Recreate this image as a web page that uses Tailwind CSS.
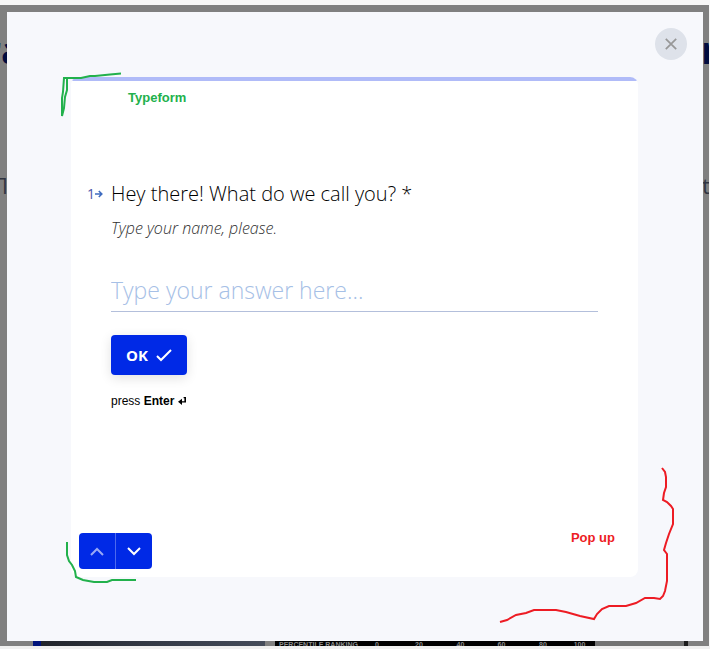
<!DOCTYPE html>
<html lang="en">
<head>
    <meta charset="UTF-8">
    <meta name="viewport" content="width=device-width, initial-scale=1.0">
    <title>Typeform Popup</title>
    <script src="https://cdn.jsdelivr.net/npm/@tailwindcss/browser@4"></script>
</head>
<body class="min-h-screen flex flex-col bg-[#f7f7f7] font-['Open_Sans',sans-serif] text-black">
    <!-- Dimmed page -->
    <div class="relative flex-1 flex mt-[5px] mr-px bg-[#808080] overflow-hidden">
        <!-- Page content behind the popup -->
        <div class="absolute inset-0 overflow-hidden" aria-hidden="true">
            <span class="absolute top-[14px] right-full -mr-6 text-[38px] leading-[60px] font-bold text-[#000c3f]">ra</span>
            <span class="absolute top-[14px] left-full -ml-2 text-[38px] leading-[60px] font-bold text-[#000c3f]">r</span>
            <span class="absolute top-[162px] right-full -mr-2 text-[22px] leading-9 text-[#303440]">П</span>
            <span class="absolute top-[162px] left-full -ml-[7px] text-[22px] leading-9 text-[#303440]">t</span>
            <div class="absolute bottom-0 inset-x-0 h-[5px] flex pl-[33px] overflow-hidden">
                <div class="w-2 bg-[#00137c]"></div>
                <div class="w-[224px] mr-[10px] bg-linear-to-r from-[#22252b] via-[#343a46] to-[#454c5a]"></div>
                <div class="w-80 flex bg-black text-[#8a8a8a] font-['Liberation_Sans',sans-serif] text-[7px] leading-[7px] font-bold">
                    <span class="w-[81px] pl-1 whitespace-nowrap">PERCENTILE RANKING</span>
                    <span class="w-[42px] text-center">0</span>
                    <span class="w-[42px] text-center">20</span>
                    <span class="w-[41px] text-center">40</span>
                    <span class="w-[41px] text-center">60</span>
                    <span class="w-[42px] text-center">80</span>
                    <span class="w-[31px] text-center">100</span>
                </div>
                <div class="w-[89px] bg-[#737373]"></div>
                <div class="w-1 bg-[#1c1c1c]"></div>
            </div>
        </div>

        <!-- Popup -->
        <div class="relative flex-1 flex flex-col mt-[7px] mb-[5px] ml-[7px] mr-[6px] bg-[#f7f8fc]">
            <button type="button" aria-label="Close" class="self-end mt-4 mr-4 size-8 rounded-full bg-[#dee2ea] flex items-center justify-center">
                <svg class="size-3" viewBox="0 0 12 12" fill="none" stroke="#979797" stroke-width="1.7"><path d="M.8.8l10.4 10.4M11.2.8L.8 11.2"/></svg>
            </button>

            <main class="flex-1 flex flex-col mt-[17px] mx-16 mr-[65px] mb-16 rounded-lg bg-white overflow-hidden">
                <div class="h-1 bg-[#b0bbf8]"></div>
                <p class="mt-[9px] ml-[57px] font-['Liberation_Sans',sans-serif] text-[13px] leading-4 font-bold text-[#22b14c]">Typeform</p>

                <form class="mt-[74px] pl-4 pr-10">
                    <div class="flex">
                        <div class="w-6 flex items-center h-7 text-sm text-[#4b55a8]">
                            <span>1</span>
                            <svg class="w-2 h-2" viewBox="0 0 8 8" fill="none" stroke="#3f6cc0" stroke-width="1.6"><path d="M0 4h6.5M3.8 1L6.8 4l-3 3"/></svg>
                        </div>
                        <label for="name" class="text-[20px] leading-7 font-light">Hey there! What do we call you? *</label>
                    </div>
                    <div class="pl-6">
                        <p id="hint" class="mt-2 text-[16px] leading-6 italic font-light text-[#303030]">Type your name, please.</p>
                        <input id="name" type="text" aria-describedby="hint" placeholder="Type your answer here..." class="mt-7 block w-full h-11 border-b border-[#b3bfdb] text-[23px] font-light outline-none placeholder:text-[#a6c0e6]">
                        <button type="submit" class="mt-[23px] h-10 px-[15px] rounded bg-[#0029e6] text-white flex items-center gap-2 text-[15px] font-bold shadow-[0_3px_12px_rgba(0,0,0,0.12)]">
                            OK
                            <svg class="w-4 h-[13px]" viewBox="0 0 16 13" fill="#fff"><path d="M14.293.293l1.414 1.414L5 12.414.293 7.707l1.414-1.414L5 9.586z"/></svg>
                        </button>
                        <p class="mt-[18px] flex items-center text-xs leading-4 font-['Liberation_Sans',sans-serif]">
                            <span>press <b>Enter</b></span>
                            <svg class="ml-1 w-2 h-2" viewBox="0 0 8 8" fill="#000"><path d="M5.6 0H8v5.6H4V8L0 4.8 4 1.8v2.4h2.4V1.2h-.8z"/></svg>
                        </p>
                    </div>
                </form>

                <div class="mt-auto flex items-end justify-between pl-2 pr-[23px] pb-2">
                    <div class="flex rounded bg-[#0029e6] overflow-hidden">
                        <button type="button" aria-label="Previous" class="w-9 h-9 flex items-center justify-center">
                            <svg class="w-[14px] h-[9px]" viewBox="0 0 14 9" fill="none" stroke="#99a9f5" stroke-width="2"><path d="M1 8l6-6 6 6"/></svg>
                        </button>
                        <button type="button" aria-label="Next" class="w-[37px] h-9 border-l border-[#4d69ee] flex items-center justify-center">
                            <svg class="w-[14px] h-[9px]" viewBox="0 0 14 9" fill="none" stroke="#fff" stroke-width="2"><path d="M1 1l6 6 6-6"/></svg>
                        </button>
                    </div>
                    <p class="pb-[23px] font-['Liberation_Sans',sans-serif] text-[13px] leading-4 font-bold text-[#ed1c24]">Pop up</p>
                </div>
            </main>

            <!-- Pen marks around the form and the popup -->
            <svg class="absolute top-[57px] left-[51px] w-[66px] h-12 pointer-events-none" viewBox="58 69 66 48" fill="none" stroke="#22b14c" stroke-width="2"><path d="M121 73.500L110 74.500 95 76 90 76 81 78 64 78 63 92 62 98 62 116 64 108 65 97 67 90 67 79"/></svg>
            <svg class="absolute bottom-[57px] left-[57px] w-[74px] h-[46px] pointer-events-none" viewBox="64 538 74 46" fill="none" stroke="#22b14c" stroke-width="2"><path d="M67 542L67 555 69 561 72 565 75 571 76 577 83 580 94 582 107 582 112 580 136 580"/></svg>
            <svg class="absolute bottom-4 right-[26px] w-[180px] h-[161px] pointer-events-none" viewBox="497 464 180 161" fill="none" stroke="#ed1c24" stroke-width="2"><path d="M662 468L665 472 666 477 666 487 664 493 663 500 667 502 671 506 673 509 673 524 669 534 666 543 664 550 667 554 667 581 665 591 663 596 660 599 654 598 645 598 636 603 626 606 609 606 602 609 597 614 594 619 580 616 566 612 556 610 534 610 526 613 516 615 507 620 500 622"/></svg>
        </div>
    </div>
    <div class="h-[3px] bg-[#f0f0f0]"></div>
</body>
</html>
